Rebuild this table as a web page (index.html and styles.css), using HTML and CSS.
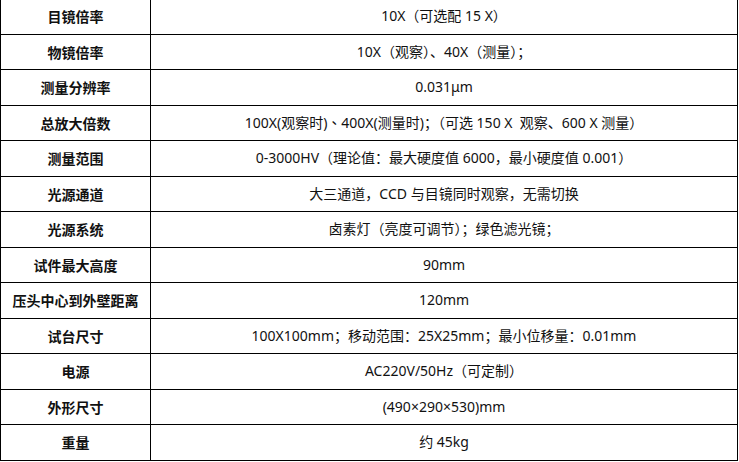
FILE: index.html
```html
<!DOCTYPE html>
<html lang="zh-CN">
<head>
<meta charset="utf-8">
<link rel="stylesheet" href="styles.css">
</head>
<body>
<table class="spec">
<tbody>
<tr><th>目镜倍率</th><td>10X（可选配 15 X）</td></tr>
<tr><th>物镜倍率</th><td>10X（观察）、40X（测量）；</td></tr>
<tr><th>测量分辨率</th><td>0.031μm</td></tr>
<tr><th>总放大倍数</th><td>100X(观察时)、400X(测量时)；（可选 150 X&nbsp; 观察、600 X 测量）</td></tr>
<tr><th>测量范围</th><td>0-3000HV（理论值：最大硬度值 6000，最小硬度值 0.001）</td></tr>
<tr><th>光源通道</th><td>大三通道，CCD 与目镜同时观察，无需切换</td></tr>
<tr><th>光源系统</th><td>卤素灯（亮度可调节）；绿色滤光镜；</td></tr>
<tr><th>试件最大高度</th><td>90mm</td></tr>
<tr><th>压头中心到外壁距离</th><td>120mm</td></tr>
<tr><th>试台尺寸</th><td>100X100mm；移动范围：25X25mm；最小位移量：0.01mm</td></tr>
<tr><th>电源</th><td>AC220V/50Hz（可定制）</td></tr>
<tr><th>外形尺寸</th><td>(490×290×530)mm</td></tr>
<tr><th>重量</th><td>约 45kg</td></tr>
</tbody>
</table>
</body>
</html>
```
FILE: styles.css
```css
html, body {
  margin: 0;
  padding: 0;
  background: #ffffff;
}
.spec {
  border-collapse: collapse;
  width: 738px;
  margin-top: -2px;
  font-family: "Noto Sans", "Noto Sans CJK TC", sans-serif;
  font-size: 14px;
  color: #111111;
}
.spec th, .spec td {
  border: 1px solid #000000;
  height: 34.5px;
  padding: 0;
  text-align: center;
  vertical-align: middle;
  line-height: 18px;
}
.spec th {
  width: 149px;
  font-weight: bold;
  font-family: "Noto Sans CJK SC", sans-serif;
}
.spec td {
  font-weight: normal;
}
```
